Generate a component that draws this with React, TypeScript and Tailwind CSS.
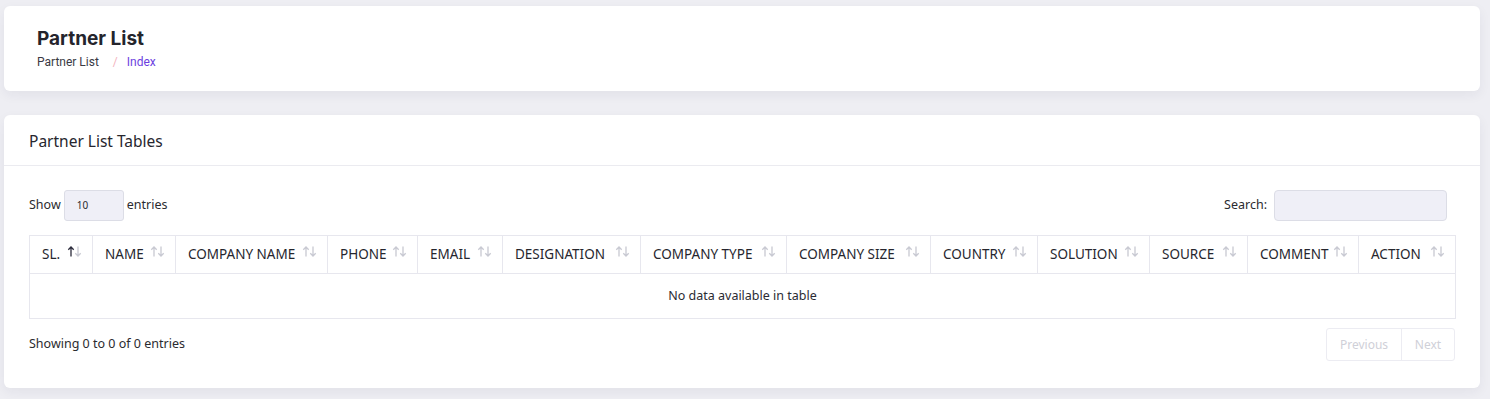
import React from "react";

const columns = [
  { label: "SL.", width: 63, active: true },
  { label: "NAME", width: 83 },
  { label: "COMPANY NAME", width: 152 },
  { label: "PHONE", width: 90 },
  { label: "EMAIL", width: 85 },
  { label: "DESIGNATION", width: 138 },
  { label: "COMPANY TYPE", width: 146 },
  { label: "COMPANY SIZE", width: 144 },
  { label: "COUNTRY", width: 107 },
  { label: "SOLUTION", width: 112 },
  { label: "SOURCE", width: 98 },
  { label: "COMMENT", width: 111 },
  { label: "ACTION", width: 97 },
];

const SortIcon = ({ active }: { active?: boolean }) => (
  <svg width="15" height="11" viewBox="0 0 15 11" fill="none" strokeWidth="1.3">
    <path d="M4 10.5V1M1.3 3.7L4 1l2.7 2.7" stroke={active ? "#2b2b3b" : "#c8c9d2"} />
    <path d="M11 0.5V10M8.3 7.3L11 10l2.7-2.7" stroke="#c8c9d2" />
  </svg>
);

const App = () => {
  return (
    <div
      className="min-h-[399px] bg-[#eeeef3] pl-1 pr-[10px] pt-[6px] pb-[11px] text-[#2b2b2f]"
      style={{ fontFamily: '"Noto Sans", "Open Sans", sans-serif' }}
    >
      <div className="rounded-md bg-white px-[33px] pt-[20px] pb-[21px] shadow-[0_4px_12px_rgba(30,30,60,0.06)]">
        <h1 className="text-[19px] font-bold leading-[26px] text-[#24242c]" style={{ fontFamily: "Inter, sans-serif" }}>
          Partner List
        </h1>
        <div className="mt-[2px] flex items-center text-[12px] leading-[16px]" style={{ fontFamily: "Roboto, sans-serif" }}>
          <span className="text-[#3a3a44]">Partner List</span>
          <span className="ml-[14px] mr-[9px] text-[#f3b3bd]">/</span>
          <span className="text-[#6c3ee0]">Index</span>
        </div>
      </div>

      <div className="mt-[24px] rounded-md bg-white shadow-[0_4px_12px_rgba(30,30,60,0.06)]">
        <div className="border-b border-[#ebebf0] px-[25px] pt-[15px] pb-[13px] text-[15.5px] leading-[22px] text-[#26262e]">
          Partner List Tables
        </div>
        <div className="px-[25px] pt-[24px] pb-[27px]">
          <div className="flex items-start justify-between">
            <div className="flex items-center gap-[3px] text-[12.5px]">
              <span>Show</span>
              <div className="flex h-[31px] w-[60px] items-center rounded-[3px] border border-[#dcdde6] bg-[#efeff7] pl-[12px] text-[10px]">
                10
              </div>
              <span>entries</span>
            </div>
            <div className="flex items-center gap-[7px] pr-[8px] text-[12.5px]">
              <span>Search:</span>
              <div className="h-[31px] w-[173px] rounded-[4px] border border-[#dcdde6] bg-[#efeff7]" />
            </div>
          </div>

          <table className="mt-[14px] w-full table-fixed border-collapse border border-[#e7e7ee]">
            <colgroup>
              {columns.map((c) => (
                <col key={c.label} style={{ width: c.width }} />
              ))}
            </colgroup>
            <thead>
              <tr className="h-[38px]">
                {columns.map((c) => (
                  <th
                    key={c.label}
                    className="border border-[#e7e7ee] pl-[12px] pr-[10px] text-left text-[13.5px] font-normal text-[#26262e]"
                  >
                    <div className="flex items-center justify-between whitespace-nowrap">
                      <span>{c.label}</span>
                      <span className="-mt-[7px]">
                        <SortIcon active={c.active} />
                      </span>
                    </div>
                  </th>
                ))}
              </tr>
            </thead>
            <tbody>
              <tr className="h-[45px]">
                <td colSpan={13} className="border border-[#e7e7ee] text-center text-[12.5px] text-[#2b2b33]">
                  No data available in table
                </td>
              </tr>
            </tbody>
          </table>

          <div className="mt-[9px] flex items-center justify-between">
            <span className="text-[12.5px]">Showing 0 to 0 of 0 entries</span>
            <div className="flex h-[33px] rounded-[3px] border border-[#ececf2] text-[12px] text-[#cfd0d8]">
              <span className="flex w-[75px] items-center justify-center border-r border-[#ececf2]">Previous</span>
              <span className="flex w-[52px] items-center justify-center">Next</span>
            </div>
          </div>
        </div>
      </div>
    </div>
  );
};

export default App;
